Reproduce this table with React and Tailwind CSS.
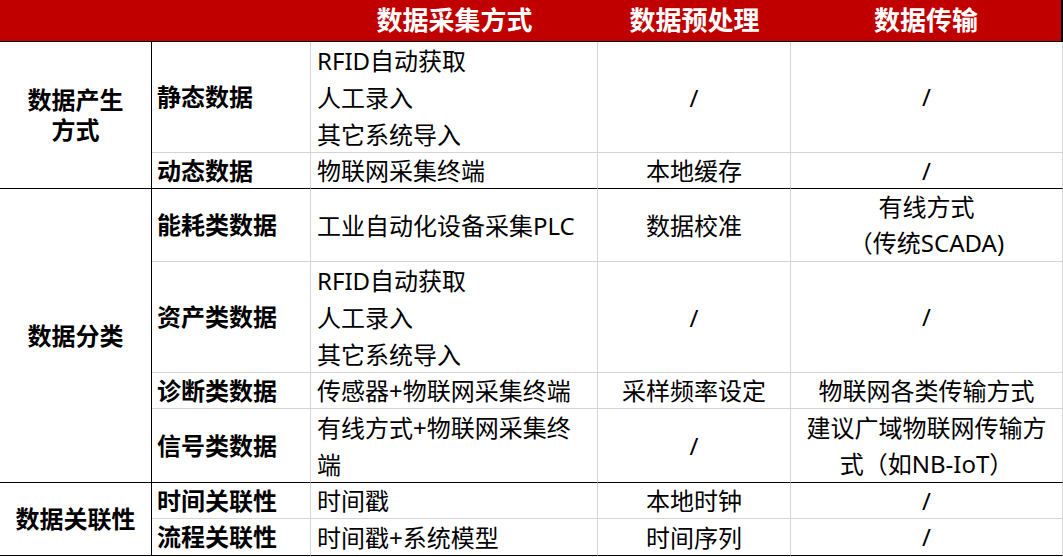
import React from 'react';

const grey = 'border-[#d4d4d4]';

const groups = [
  {
    title: ['数据产生', '方式'],
    span: 'row-span-2',
    rows: [
      { name: '静态数据', src: ['RFID自动获取', '人工录入', '其它系统导入'], pre: ['/'], tx: ['/'] },
      { name: '动态数据', src: ['物联网采集终端'], pre: ['本地缓存'], tx: ['/'] },
    ],
  },
  {
    title: ['数据分类'],
    span: 'row-span-4',
    rows: [
      { name: '能耗类数据', src: ['工业自动化设备采集PLC'], pre: ['数据校准'], tx: ['有线方式', '（传统SCADA)'] },
      { name: '资产类数据', src: ['RFID自动获取', '人工录入', '其它系统导入'], pre: ['/'], tx: ['/'] },
      { name: '诊断类数据', src: ['传感器+物联网采集终端'], pre: ['采样频率设定'], tx: ['物联网各类传输方式'] },
      { name: '信号类数据', src: ['有线方式+物联网采集终', '端'], pre: ['/'], tx: ['建议广域物联网传输方', '式（如NB-IoT）'] },
    ],
  },
  {
    title: ['数据关联性'],
    span: 'row-span-2',
    rows: [
      { name: '时间关联性', src: ['时间戳'], pre: ['本地时钟'], tx: ['/'] },
      { name: '流程关联性', src: ['时间戳+系统模型'], pre: ['时间序列'], tx: ['/'] },
    ],
  },
];

function Lines({ lines }) {
  return lines.map((l, i) => <div key={i}>{l}</div>);
}

export default function App() {
  return (
    <div
      className="w-[1063px] h-[557px] bg-white text-black overflow-hidden"
      style={{ fontFamily: '"Noto Sans", "Noto Sans CJK SC", sans-serif' }}
    >
      <div className="grid grid-cols-[152px_159px_287px_193px_272px] grid-rows-[42px_111px_36px_73px_111px_36px_74px_36px_37px] text-[24px]">
        {/* Header */}
        <div className="col-span-2 bg-[#c00000] border-b border-black" />
        <div className="bg-[#c00000] border-b border-black flex items-center justify-center text-white font-bold text-[26px]">数据采集方式</div>
        <div className="bg-[#c00000] border-b border-black flex items-center justify-center text-white font-bold text-[26px]">数据预处理</div>
        <div className="bg-[#c00000] border-b border-r-2 border-black flex items-center justify-center text-white font-bold text-[26px]">数据传输</div>

        {groups.map((g) =>
          [
            <div
              key={g.title[0]}
              className={`${g.span} border-r border-b border-black flex flex-col items-center justify-center font-bold leading-[30px]`}
            >
              <Lines lines={g.title} />
            </div>,
            ...g.rows.map((r, i) => {
              const last = i === g.rows.length - 1;
              const b = last ? 'border-b border-black' : `border-b ${grey}`;
              return (
                <React.Fragment key={r.name}>
                  <div className={`${b} border-r border-r-[#d4d4d4] flex items-center pl-[5px] font-bold`}>{r.name}</div>
                  <div className={`${b} border-r border-r-[#d4d4d4] flex flex-col justify-center pl-[6px] leading-[37px]`}>
                    <Lines lines={r.src} />
                  </div>
                  <div className={`${b} border-r border-r-[#d4d4d4] flex flex-col items-center justify-center leading-[37px]`}>
                    <Lines lines={r.pre} />
                  </div>
                  <div className={`${b} border-r border-r-[#d4d4d4] flex flex-col items-center justify-center leading-[36px]`}>
                    <Lines lines={r.tx} />
                  </div>
                </React.Fragment>
              );
            }),
          ]
        )}
      </div>
    </div>
  );
}
